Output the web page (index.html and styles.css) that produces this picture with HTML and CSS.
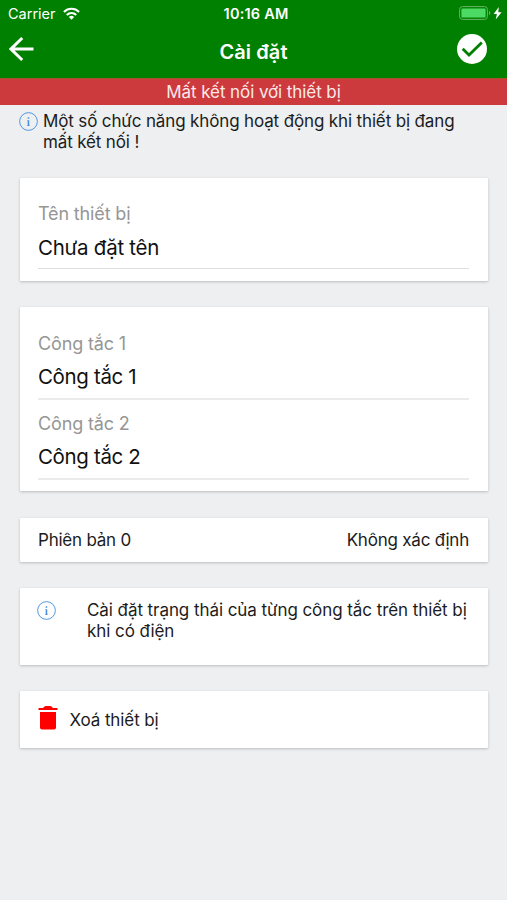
FILE: index.html
```html
<!DOCTYPE html>
<html lang="vi">
<head>
<meta charset="utf-8">
<meta name="viewport" content="width=device-width, initial-scale=1">
<title>Cài đặt</title>
<link rel="stylesheet" href="styles.css">
</head>
<body>
<header class="header">
  <div class="status">
    <div class="carrier"><span class="carrier-name">Carrier</span>
      <svg class="wifi" viewBox="0 0 18 13"><g fill="none" stroke="#fff" stroke-width="2.2"><path d="M1 4.8a11.3 11.3 0 0 1 16 0"/><path d="M4 8a7.1 7.1 0 0 1 10 0"/></g><path fill="#fff" d="M6.2 10.2a4 4 0 0 1 5.6 0L9 13z"/></svg>
    </div>
    <time class="clock">10:16 AM</time>
    <svg class="battery" viewBox="0 0 43 15"><rect x=".6" y=".6" width="27.8" height="12.8" rx="2.8" fill="none" stroke="#66b566" stroke-width="1"/><rect x="2.4" y="2.4" width="24.2" height="9.2" rx="1.2" fill="#4cd964"/><path d="M30 5v4q1.4-.5 1.4-2T30 5z" fill="#66b566"/><path d="M39.8 1 34.600 8h3.300l-1.200 5.500L42.600 6.300h-3.300z" fill="#fff"/></svg>
  </div>
  <nav class="nav">
    <svg class="back" viewBox="0 0 26 26"><path d="M24.5 13H2M13.2 2 2 13l11.2 11" fill="none" stroke="#fff" stroke-width="3"/></svg>
    <h1 class="title">Cài đặt</h1>
    <svg class="confirm" viewBox="0 0 30 30"><circle cx="15" cy="15" r="15" fill="#fff"/><path d="M5.7 14.7 12 21 24.8 8.6" fill="none" stroke="#008000" stroke-width="2.8"/></svg>
  </nav>
</header>
<div class="banner"><span class="banner-text">Mất kết nối với thiết bị</span></div>
<main class="content">
  <div class="notice">
    <svg class="info" viewBox="0 0 18 18"><circle cx="9" cy="9" r="8.4" fill="none" stroke="#4a90e2" stroke-width=".9"/><path d="M8.2 4.9h1.5v1.5H8.2zM7.7 7.7h2v5h.7v.6H7.5v-.6h.7V8.3h-.5z" fill="#4a90e2"/></svg>
    <p class="text"><span class="notice-a">Một số chức năng không hoạt động khi thiết bị đang</span><br><span class="notice-b">mất kết nối !</span></p>
  </div>
  <section class="card device">
    <div class="field"><label class="label">Tên thiết bị</label><div class="value">Chưa đặt tên</div></div>
  </section>
  <section class="card switches">
    <div class="field"><label class="label">Công tắc 1</label><div class="value">Công tắc 1</div></div>
    <div class="field"><label class="label">Công tắc 2</label><div class="value">Công tắc 2</div></div>
  </section>
  <section class="card version"><span class="version-name">Phiên bản 0</span><span class="version-state">Không xác định</span></section>
  <section class="card power">
    <svg class="info" viewBox="0 0 18 18"><circle cx="9" cy="9" r="8.4" fill="none" stroke="#4a90e2" stroke-width=".9"/><path d="M8.2 4.9h1.5v1.5H8.2zM7.7 7.7h2v5h.7v.6H7.5v-.6h.7V8.3h-.5z" fill="#4a90e2"/></svg>
    <p class="text"><span class="power-a">Cài đặt trạng thái của từng công tắc trên thiết bị</span><br><span class="power-b">khi có điện</span></p>
  </section>
  <section class="card remove">
    <svg class="trash" viewBox="0 0 20 24"><path fill="#f00" d="M.5 2H5l1.5-1.5Q7 0 8 0h4q1 0 1.5.5L15 2h4.5v2H.5zM2 6h16v15.5q0 2-2 2H4q-2 0-2-2z"/></svg>
    <span class="remove-text">Xoá thiết bị</span>
  </section>
</main>
</body>
</html>
```
FILE: styles.css
```css
* { box-sizing: border-box; }
body {
  margin: 0;
  min-height: 900px;
  background: #edeff0;
  color: #1c1c1c;
  font: 17px/21px Inter, "Liberation Sans", sans-serif;
  letter-spacing: -0.14px;
  white-space: nowrap;
}
svg { display: block; flex: none; }
h1, p { margin: 0; }
.header { height: 78px; background: #008000; color: #fff; }
.status {
  display: grid;
  grid-template-columns: 1fr auto 1fr;
  align-items: center;
  height: 28px;
  padding: 0 5px 0 8px;
}
.carrier { display: flex; align-items: center; gap: 7px; font-size: 14.5px; line-height: 19px; letter-spacing: 0; }
.carrier-name { margin-top: -1px; }
.wifi { width: 17px; height: 13px; margin-top: -2px; }
.clock { margin: -1px 0 0 2px; font-size: 14.5px; font-weight: 600; letter-spacing: 0.2px; }
.battery { width: 43px; height: 15px; margin-top: -1px; justify-self: end; }
.nav {
  display: grid;
  grid-template-columns: 1fr auto 1fr;
  align-items: start;
  height: 50px;
  padding: 6px 9px 0;
}
.back { width: 26px; height: 26px; margin-top: 2px; }
.title { margin-top: 5px; font-size: 20px; line-height: 26px; font-weight: 600; letter-spacing: 0.1px; }
.confirm { width: 30px; height: 30px; margin-right: 11px; justify-self: end; }
.banner {
  height: 27px;
  background: #cd3a3d;
  border-top: 1px solid #a6532c;
  color: #fbe9e9;
  line-height: 27px;
  text-align: center;
  letter-spacing: -0.08px;
}
.content { padding: 6px 19px 0 20px; }
.notice { display: flex; gap: 5px; height: 67px; }
.notice .info { margin: 1px 0 0 -1px; }
.info { width: 19px; height: 19px; }
.card {
  margin-bottom: 26px;
  padding: 0 19px 0 18px;
  background: #fff;
  border-radius: 1px;
  box-shadow: 0 1px 3px rgba(0, 0, 0, .22);
}
.device { height: 103px; padding-top: 23px; }
.switches { height: 184px; padding-top: 24px; margin-bottom: 27px; }
.field { height: 69px; border-bottom: 2px solid #ebebec; }
.device .field { height: 68px; border-bottom: 1px solid #dedee0; }
.field + .field { margin-top: 11px; }
.label { display: block; padding-top: 2px; color: #969696; font-size: 18px; line-height: 22px; }
.value { margin-top: 9px; color: #111; font-size: 20.5px; line-height: 26px; letter-spacing: -0.35px; }
.device .value { line-height: 27px; letter-spacing: -0.25px; }
.version { display: flex; justify-content: space-between; align-items: center; height: 44px; letter-spacing: -0.22px; }
.power { display: flex; gap: 31px; height: 77px; padding-top: 12px; letter-spacing: -0.07px; }
.power .info { margin: 1px 0 0 -1px; }
.remove { display: flex; align-items: center; gap: 12px; height: 57px; letter-spacing: -0.1px; }
.trash { width: 20px; height: 24px; margin-top: -3px; margin-left: -0.5px; }
.remove-text { padding-top: 1px; }
```
